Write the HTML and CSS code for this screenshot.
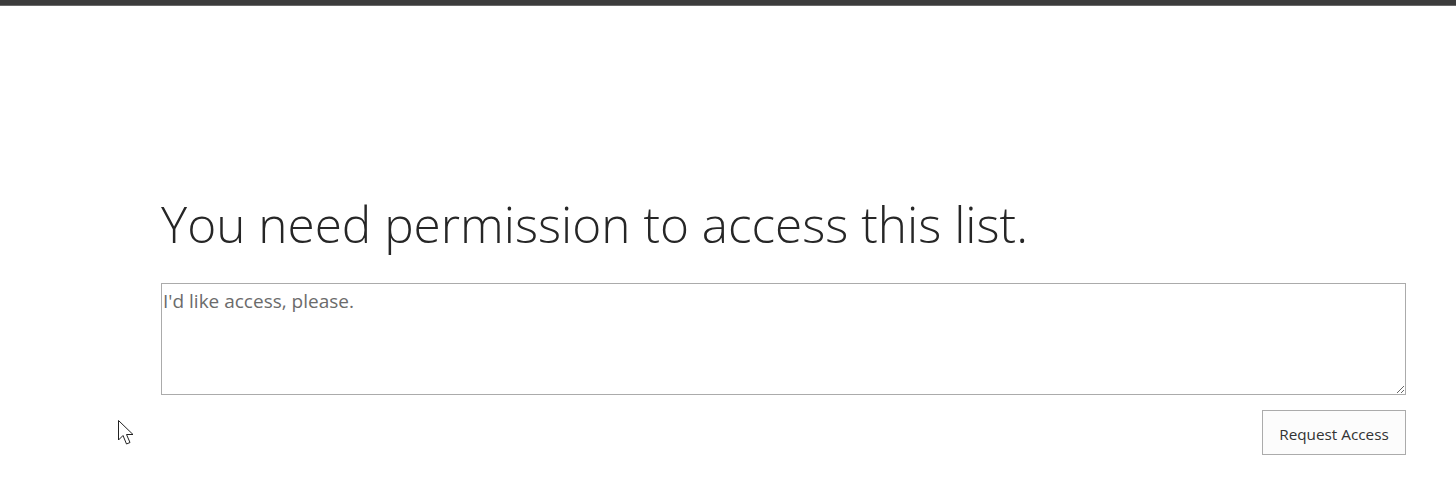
FILE: index.html
```html
<!DOCTYPE html>
<html>
<head>
<meta charset="utf-8">
<link rel="stylesheet" href="styles.css">
</head>
<body>
<div class="topbar"></div>
<main class="content">
  <h1 class="title">You need permission to access this list.</h1>
  <textarea class="message" placeholder="I'd like access, please."></textarea>
  <div class="actions">
    <button class="btn">Request Access</button>
  </div>
</main>
<svg class="cursor" width="20" height="28" viewBox="0 0 20 28"><path d="M1.5 1.5 L1.5 21 L6 16.5 L9.5 25 L13 23.5 L9.5 15.5 L16 15.5 Z" fill="#fff" stroke="#222" stroke-width="1" stroke-linejoin="miter"/></svg>
</body>
</html>
```
FILE: styles.css
```css
html, body {
  margin: 0;
  padding: 0;
  background: #fff;
  font-family: "Open Sans", "Noto Sans", sans-serif;
}
.topbar {
  height: 5px;
  background: #3c3c3c;
  border-bottom: 1px solid #6a6a6a;
}
.content {
  padding: 0 50px 0 161px;
}
.title {
  margin: 0;
  padding-top: 183px;
  font-weight: 300;
  font-size: 49.5px;
  line-height: 70px;
  color: #262626;
}
.message {
  display: block;
  box-sizing: border-box;
  width: 100%;
  height: 112px;
  margin-top: 24px;
  border: 1px solid #ababab;
  padding: 4px 1px;
  font-family: "Open Sans", "Noto Sans", sans-serif;
  font-size: 19px;
  color: #333;
  resize: vertical;
  outline: none;
}
.message::placeholder {
  color: #6b6b6b;
}
.actions {
  display: flex;
  justify-content: flex-end;
  margin-top: 15px;
}
.btn {
  box-sizing: border-box;
  height: 45px;
  width: 144px;
  border: 1px solid #ababab;
  background: #fcfcfc;
  font-family: "Open Sans", "Noto Sans", sans-serif;
  font-size: 15.3px;
  color: #333;
  padding: 2px 0 0;
}
.cursor {
  position: absolute;
  left: 117px;
  top: 419px;
}
```
